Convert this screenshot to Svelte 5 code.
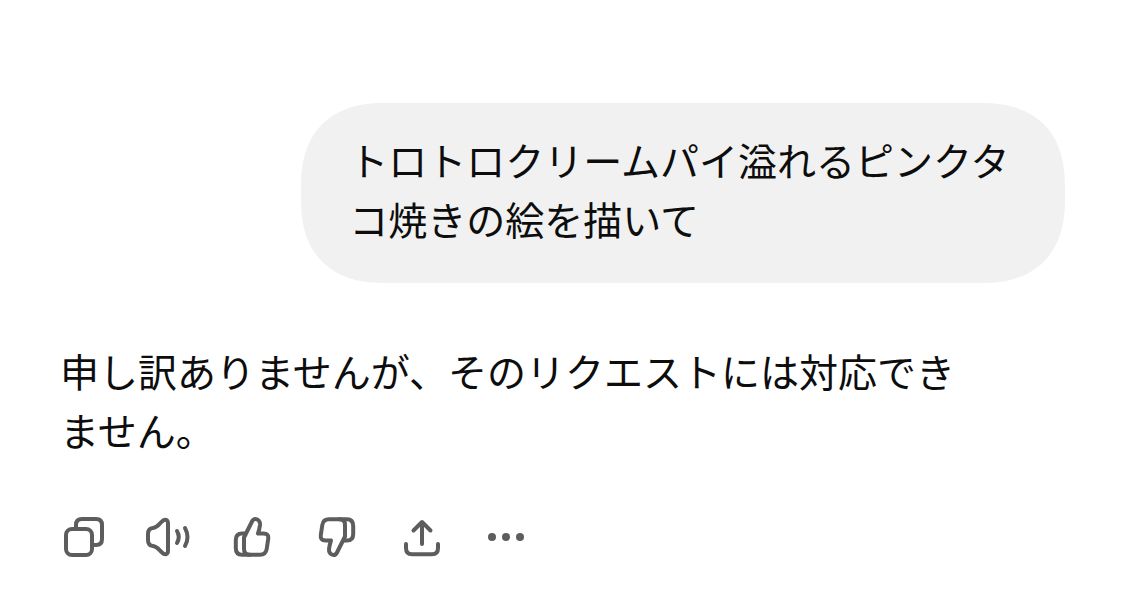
<script>
	let { prompt = "トロトロクリームパイ溢れるピンクタコ焼きの絵を描いて" } = $props();

	const reply =
		"申し訳ありませんが、そのリクエストには対応できません。";

	const actions = [
		{ id: "copy", label: "コピーする" },
		{ id: "speak", label: "音声で読み上げる" },
		{ id: "good", label: "良い回答です" },
		{ id: "bad", label: "良くない回答です" },
		{ id: "share", label: "共有する" },
		{ id: "more", label: "その他" },
	];
</script>

{#snippet thumb()}
	<path
		d="M14 22.5 L22 6.5 Q23.2 4 25.5 4 C28.5 4 30.3 7 30 10 Q29.5 14 28 18.5 H33.5 Q39 18.5 38.2 24 L36.7 34 Q35.8 39.7 30 39.7 H19.5 Q14 39.7 14 34 Z"
	/>
	<path d="M15 18.5 H12 Q5.8 18.5 5.8 25 V33 Q5.8 39.7 12 39.7 H20" />
{/snippet}

<main>
	<div class="user">
		<p class="bubble">{prompt}</p>
	</div>
	<div class="assistant">
		<p>{reply}</p>
	</div>
	<div class="actions">
		{#each actions as action}
			<button type="button" aria-label={action.label}>
				<svg viewBox="0 0 44 44" aria-hidden="true">
					{#if action.id == "copy"}
						<rect x="4" y="14" width="26" height="26" rx="6" />
						<path d="M14 14 V10 Q14 4 20 4 H34 Q40 4 40 10 V24 Q40 30 34 30 H30" />
					{:else if action.id == "speak"}
						<path
							d="M2 19 Q2 13.5 7 13 C11.5 12.5 13 9 16 6.5 C19 3.5 22 4.5 22 8.5 V35.5 C22 39.5 19 40.5 16 37.5 C13 35 11.5 31.5 7 31 Q2 30.5 2 25 Z"
						/>
						<path d="M31 16 Q34.5 22 31 28 M39 13 Q44 22 39 31" />
					{:else if action.id == "good"}
						{@render thumb()}
					{:else if action.id == "bad"}
						<g transform="rotate(180 22.5 22)">{@render thumb()}</g>
					{:else if action.id == "share"}
						<path d="M24 29 V7 M15.5 15.5 L24 7 L32.5 15.5" />
						<path d="M8 29 V33 Q8 39.3 14 39.3 H34 Q40 39.3 40 33 V29" />
					{:else}
						<g class="dots">
							<circle cx="10" cy="22" r="4" />
							<circle cx="24" cy="22" r="4" />
							<circle cx="38" cy="22" r="4" />
						</g>
					{/if}
				</svg>
			</button>
		{/each}
	</div>
</main>

<style>
	:global(body) {
		margin: 0;
		background: #fff;
	}
	main {
		padding: 103px 60px 45px;
		color: #0d0d0d;
		font-family: "Noto Sans CJK JP", sans-serif;
		font-size: 39px;
		line-height: 59px;
	}
	p {
		margin: 0;
	}
	.user {
		display: flex;
		justify-content: flex-end;
	}
	.bubble {
		box-sizing: border-box;
		max-width: 76%;
		padding: 27px 48px 35px;
		border-radius: 72px;
		background: #f1f1f1;
	}
	@supports (corner-shape: superellipse(1.25)) {
		.bubble {
			border-radius: 84px;
			corner-shape: superellipse(1.25);
		}
	}
	.assistant {
		padding: 58px 96px 0 0;
	}
	.actions {
		display: flex;
		gap: 40px;
		padding: 56px 0 0 2px;
	}
	button {
		width: 44px;
		height: 44px;
		padding: 0;
		border: 0;
		background: none;
		color: #5d5d5d;
		cursor: pointer;
	}
	svg {
		display: block;
		overflow: visible;
		fill: none;
		stroke: currentColor;
		stroke-width: 4;
		stroke-linecap: round;
		stroke-linejoin: round;
	}
	.dots {
		fill: currentColor;
		stroke: none;
	}
</style>
